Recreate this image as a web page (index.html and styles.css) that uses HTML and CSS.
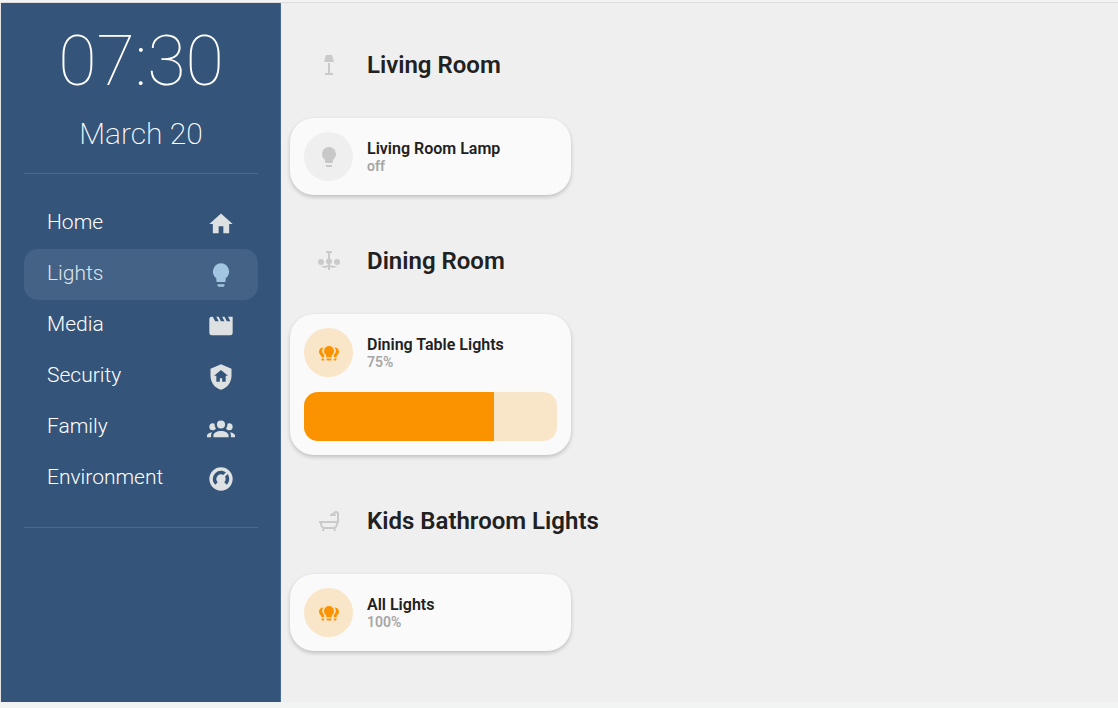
FILE: index.html
```html
<!DOCTYPE html>
<html lang="en">
<head>
<meta charset="utf-8">
<meta name="viewport" content="width=device-width, initial-scale=1">
<title>Lights</title>
<link rel="stylesheet" href="styles.css">
</head>
<body>
<svg class="sprite" aria-hidden="true">
  <symbol id="bulb" viewBox="0 0 24 24"><path d="M12,2A7,7 0 0,0 5,9C5,11.38 6.19,13.47 8,14.74V17A1,1 0 0,0 9,18H15A1,1 0 0,0 16,17V14.74C17.81,13.47 19,11.38 19,9A7,7 0 0,0 12,2M9,21A1,1 0 0,0 10,22H14A1,1 0 0,0 15,21V20H9V21Z"/></symbol>
  <symbol id="bulbs" viewBox="0 0 24 24"><path d="M12 5A5 5 0 0 0 7 10C7 11.9 8 13.2 9.2 14.3V16.2H14.8V14.3C16 13.2 17 11.9 17 10A5 5 0 0 0 12 5M9.5 17.5V18.5Q9.5 19.5 10.5 19.5H13.5Q14.5 19.5 14.5 18.5V17.5ZM6.5 6.5A4.2 4.2 0 0 0 2 10.7C2 12.7 3.1 13.6 4.3 14.7V16.2H7.2V13.7C5.9 12.6 5.2 11.3 5.2 9.7C5.2 8.5 5.7 7.4 6.5 6.5M4.5 17.5V18.5Q4.5 19.5 5.5 19.5H7.2V17.5ZM17.5 6.5A4.2 4.2 0 0 1 22 10.7C22 12.7 20.9 13.6 19.7 14.7V16.2H16.8V13.7C18.1 12.6 18.8 11.3 18.8 9.7C18.8 8.5 18.3 7.4 17.5 6.5M16.8 17.5V19.5H18.5Q19.5 19.5 19.5 18.5V17.5Z"/></symbol>
</svg>
<div class="app">
  <aside class="sidebar">
    <time class="clock">07:30</time>
    <time class="date">March 20</time>
    <hr class="rule">
    <nav class="nav">
      <a class="nav-link" href="#home">Home<svg class="nav-icon" viewBox="0 0 24 24"><path d="M10,20V14H14V20H19V12H22L12,3L2,12H5V20H10Z"/></svg></a>
      <a class="nav-link active" href="#lights" aria-current="page">Lights<svg class="nav-icon"><use href="#bulb"/></svg></a>
      <a class="nav-link" href="#media">Media<svg class="nav-icon" viewBox="0 0 24 24"><path d="M18,4L20,8H17L15,4H13L15,8H12L10,4H8L10,8H7L5,4H4A2,2 0 0,0 2,6V18A2,2 0 0,0 4,20H20A2,2 0 0,0 22,18V4H18Z"/></svg></a>
      <a class="nav-link" href="#security">Security<svg class="nav-icon" viewBox="0 0 24 24"><path d="M11,13H13V16H16V11H18L12,6L6,11H8V16H11V13M12,1L21,5V11C21,16.55 17.16,21.74 12,23C6.84,21.74 3,16.55 3,11V5L12,1Z"/></svg></a>
      <a class="nav-link" href="#family">Family<svg class="nav-icon" viewBox="0 0 24 24"><path d="M12,5.5A3.5,3.5 0 0,1 15.5,9A3.5,3.5 0 0,1 12,12.5A3.5,3.5 0 0,1 8.5,9A3.5,3.5 0 0,1 12,5.5M5,8C5.56,8 6.08,8.15 6.53,8.42C6.38,9.85 6.8,11.27 7.66,12.38C7.16,13.34 6.16,14 5,14A3,3 0 0,1 2,11A3,3 0 0,1 5,8M19,8A3,3 0 0,1 22,11A3,3 0 0,1 19,14C17.84,14 16.84,13.34 16.34,12.38C17.2,11.27 17.62,9.85 17.47,8.42C17.92,8.15 18.44,8 19,8M5.5,18.25C5.5,16.18 8.41,14.5 12,14.5C15.59,14.5 18.5,16.18 18.5,18.25V20H5.5V18.25M0,20V18.5C0,17.11 1.89,15.94 4.45,15.6C3.86,16.28 3.5,17.22 3.5,18.25V20H0M24,20H20.5V18.25C20.5,17.22 20.14,16.28 19.55,15.6C22.11,15.94 24,17.11 24,18.5V20Z"/></svg></a>
      <a class="nav-link" href="#environment">Environment<svg class="nav-icon" viewBox="0 0 24 24"><path d="M16.95,16.95L14.83,14.83C15.55,14.1 16,13.1 16,12C16,11.26 15.79,10.57 15.43,10L17.6,7.81C18.5,9 19,10.43 19,12C19,13.93 18.22,15.68 16.95,16.95M12,5C13.57,5 15,5.5 16.19,6.4L14,8.56C13.43,8.21 12.74,8 12,8A4,4 0 0,0 8,12C8,13.1 8.45,14.1 9.17,14.83L7.05,16.95C5.78,15.68 5,13.93 5,12A7,7 0 0,1 12,5M12,2A10,10 0 0,0 2,12A10,10 0 0,0 12,22A10,10 0 0,0 22,12A10,10 0 0,0 12,2Z"/></svg></a>
    </nav>
    <hr class="rule">
  </aside>
  <main class="rooms">
    <section class="room">
      <h2 class="room-title"><svg class="room-icon" viewBox="0 0 24 24"><path d="M9 2H15L17 9H7ZM11 10H13V20H16V22H8V20H11Z"/></svg>Living Room</h2>
      <article class="card">
        <div class="light">
          <button class="toggle" type="button" aria-label="Toggle Living Room Lamp"><svg class="toggle-icon"><use href="#bulb"/></svg></button>
          <div class="info"><h3 class="name">Living Room Lamp</h3><p class="state">off</p></div>
        </div>
      </article>
    </section>
    <section class="room">
      <h2 class="room-title"><svg class="room-icon" viewBox="0 0 24 24"><path d="M9 2H15V4H13V9.4A3 3 0 1 1 11 9.4V4H9ZM4 10A3 3 0 1 1 4 16A3 3 0 1 1 4 10M20 10A3 3 0 1 1 20 16A3 3 0 1 1 20 10M4 17H8L11 16V15H13V16L16 17H20Q18 19 15.5 19L13 18V21H11V18L8.500 19Q6 19 4 17Z"/></svg>Dining Room</h2>
      <article class="card">
        <div class="light">
          <button class="toggle on" type="button" aria-label="Toggle Dining Table Lights"><svg class="toggle-icon"><use href="#bulbs"/></svg></button>
          <div class="info"><h3 class="name">Dining Table Lights</h3><p class="state">75%</p></div>
        </div>
        <input class="level" type="range" min="0" max="100" value="75" aria-label="Dining Table Lights brightness" style="--level: 75%">
      </article>
    </section>
    <section class="room">
      <h2 class="room-title"><svg class="room-icon" viewBox="0 0 24 24"><path d="M21,14V15C21,16.91 19.93,18.57 18.35,19.41L19,22H17L16.5,20H7.5L7,22H5L5.65,19.41C4.07,18.57 3,16.91 3,15V14H2V12H20V5A1,1 0 0,0 19,4C18.5,4 18.12,4.34 18,4.79C18.63,5.33 19,6.13 19,7H13A3,3 0 0,1 16,4H16.17C16.58,2.84 17.69,2 19,2A3,3 0 0,1 22,5V14H21M19,14H5V15A3,3 0 0,0 8,18H16A3,3 0 0,0 19,15V14Z"/></svg>Kids Bathroom Lights</h2>
      <article class="card">
        <div class="light">
          <button class="toggle on" type="button" aria-label="Toggle All Lights"><svg class="toggle-icon"><use href="#bulbs"/></svg></button>
          <div class="info"><h3 class="name">All Lights</h3><p class="state">100%</p></div>
        </div>
      </article>
    </section>
  </main>
</div>
</body>
</html>
```
FILE: styles.css
```css
* { box-sizing: border-box; }
body {
  margin: 0;
  min-height: 100vh;
  display: flex;
  flex-direction: column;
  padding: 2px 0 6px;
  background: #f2f4f3;
  color: #212121;
  font-family: Roboto, sans-serif;
}
h2, h3, p { margin: 0; }
svg { fill: currentColor; flex: none; }
.sprite { display: none; }
.app {
  flex: 1;
  display: flex;
  border-top: 1px solid #dddddd;
  border-left: 1px solid #e4e4e4;
  background: #efefef;
}
.sidebar {
  flex: none;
  width: 280px;
  padding: 16px 22px 24px 23px;
  border-right: 1px solid #476a95;
  background: #34547a;
  color: #ffffff;
  display: flex;
  flex-direction: column;
}
.clock {
  font-size: 70px;
  line-height: 84px;
  font-weight: 100;
  text-align: center;
}
.date {
  margin-top: 9px;
  font-size: 30px;
  line-height: 44px;
  font-weight: 200;
  text-align: center;
}
.rule {
  width: 100%;
  height: 1px;
  margin: 17px 0 0;
  border: 0;
  background: #4a6a92;
}
.nav { margin: 24px 0 6px; }
.nav-link {
  display: flex;
  align-items: center;
  justify-content: space-between;
  height: 51px;
  padding: 0 23px 4px;
  border-radius: 14px;
  color: #ffffff;
  font-size: 21px;
  line-height: 24px;
  font-weight: 300;
  text-decoration: none;
}
.active { background: #436286; color: #e0e5ec; }
.nav-icon { width: 28px; height: 28px; margin-top: 4px; color: #dde1e2; }
.active .nav-icon { color: #a2c6e2; }
.rooms {
  flex: 1;
  min-width: 0;
  display: flex;
  flex-direction: column;
  gap: 42px;
  padding: 38px 9px;
}
.room-title {
  display: flex;
  align-items: center;
  gap: 26px;
  height: 48px;
  margin-bottom: 29px;
  padding-left: 27px;
  font-size: 24px;
  line-height: 28px;
  font-weight: 600;
}
.room-icon { width: 24px; height: 24px; color: #cacaca; }
.card {
  display: flex;
  flex-direction: column;
  gap: 15px;
  width: 281px;
  max-width: 100%;
  padding: 14px;
  border-radius: 24px;
  background: #fafafa;
  box-shadow: 0 2px 4px rgba(0, 0, 0, 0.2);
}
.light { display: flex; align-items: center; gap: 14px; }
.toggle {
  flex: none;
  display: grid;
  place-items: center;
  width: 49px;
  height: 49px;
  padding: 0;
  border: 0;
  border-radius: 50%;
  background: #efefef;
  color: #c8c8c8;
}
.on { background: #f9e6c9; color: #fb9200; }
.toggle-icon { width: 24px; height: 24px; }
.name { font-size: 16px; line-height: 18px; font-weight: 600; }
.state { color: #a6a6a6; font-size: 14px; line-height: 16px; font-weight: 600; }
.level {
  appearance: none;
  width: 100%;
  height: 49px;
  margin: 0;
  border-radius: 14px;
  background: linear-gradient(to right, #fb9200 var(--level), #f9e6c9 var(--level));
}
.level::-webkit-slider-thumb { appearance: none; width: 1px; height: 49px; background: transparent; }
```
